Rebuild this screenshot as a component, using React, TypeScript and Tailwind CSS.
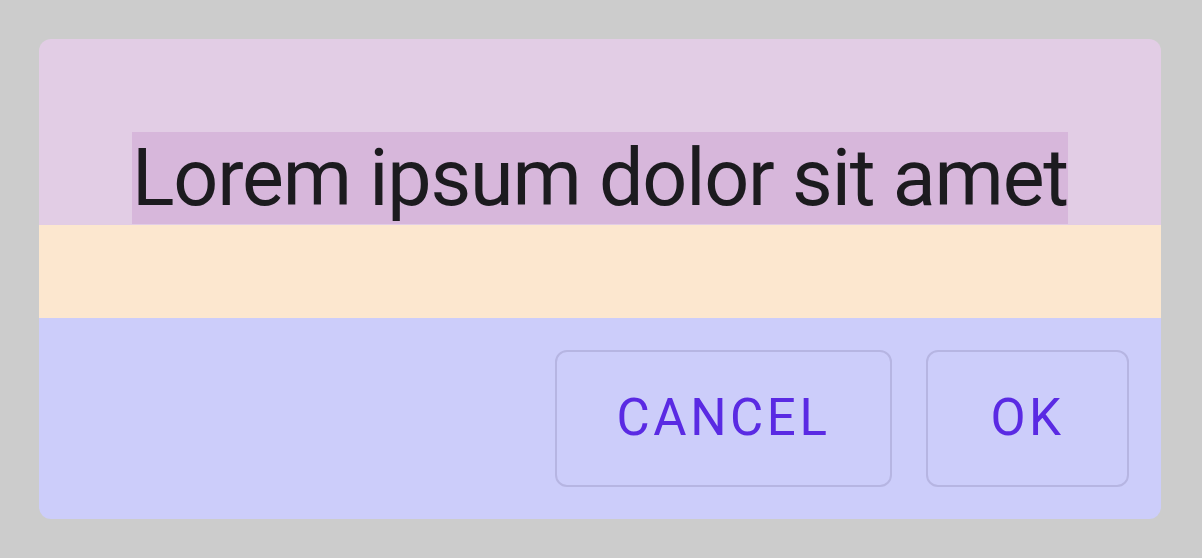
export default function App() {
  return (
    <div className="w-[1202px] h-[558px] bg-[#cccccc] p-[39px]">
      <div className="w-[1122px] h-[480px] rounded-[12px] overflow-hidden flex flex-col">
        <div className="h-[186px] bg-[#e2cde5] flex justify-center items-start pt-[93px]">
          <span className="bg-[#d7b7db] text-[#1c1b1f] text-[79px] leading-[92px] tracking-[-0.015em] font-['Roboto',sans-serif]">
            Lorem ipsum dolor sit amet
          </span>
        </div>
        <div className="h-[93px] bg-[#fce7cf]" />
        <div className="flex-1 bg-[#cccdfa] flex justify-end items-start gap-[34px] p-[32px]">
          <button className="h-[137px] w-[337px] rounded-[12px] border-2 border-[#b6b5e2] text-[#5a2ae3] text-[51px] font-normal tracking-[0.07em] font-['Roboto',sans-serif]">
            CANCEL
          </button>
          <button className="h-[137px] w-[203px] rounded-[12px] border-2 border-[#b6b5e2] text-[#5a2ae3] text-[51px] font-normal tracking-[0.07em] font-['Roboto',sans-serif]">
            OK
          </button>
        </div>
      </div>
    </div>
  );
}
